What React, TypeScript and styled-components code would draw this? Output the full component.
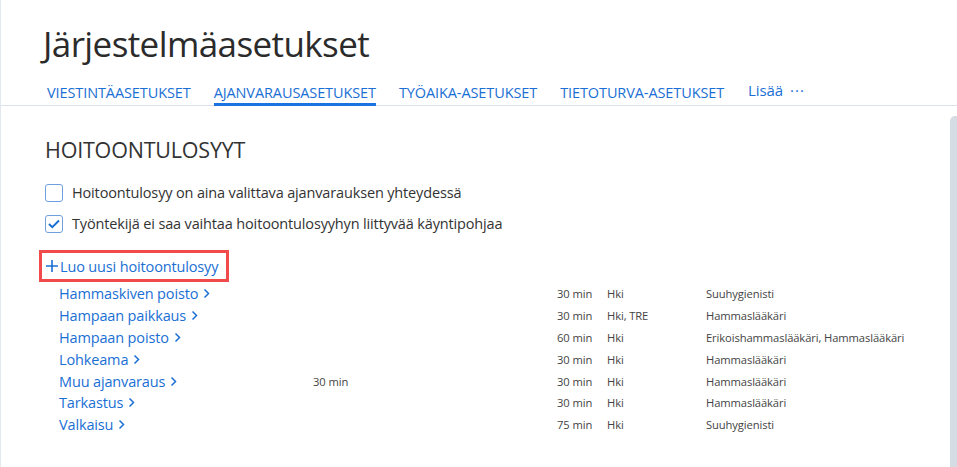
import React from "react";
import styled, { createGlobalStyle } from "styled-components";

const Global = createGlobalStyle`
  html, body { margin: 0; padding: 0; background: #fff; }
  body { font-family: "Open Sans", "Noto Sans", sans-serif; color: #333; }
  * { box-sizing: border-box; }
`;

const Page = styled.div`
  width: 957px;
  height: 467px;
  overflow: hidden;
  border-left: 1px solid #e3e7ef;
  display: flex;
  flex-direction: column;
`;

const Header = styled.header`
  padding: 20px 0 0 42px;
`;

const Title = styled.h1`
  margin: 0;
  font-size: 35px;
  font-weight: 400;
  line-height: 48px;
  color: #2b2b2b;
  letter-spacing: -0.6px;
`;

const TabBar = styled.nav`
  display: flex;
  align-items: flex-end;
  gap: 23px;
  margin-top: 13px;
  border-bottom: 1px solid #dde2ea;
  margin-left: -42px;
  padding-left: 46px;
`;

const Tab = styled.a<{ $active?: boolean }>`
  font-size: 14.5px;
  line-height: 18px;
  color: #1a6fd4;
  text-decoration: none;
  padding-bottom: 1px;
  border-bottom: 3px solid ${(p) => (p.$active ? "#1a73e0" : "transparent")};
  margin-bottom: -1px;
  letter-spacing: -0.1px;
`;

const More = styled(Tab)`
  font-size: 15px;
  padding-bottom: 6px;
  border-bottom: none;
  display: flex;
  gap: 7px;
  align-items: baseline;
  margin-bottom: 0;
  margin-left: 1px;
`;

const Dots = styled.span`
  letter-spacing: 1px;
`;

const Body = styled.div`
  flex: 1;
  display: flex;
  min-height: 0;
`;

const Content = styled.main`
  flex: 1;
  padding: 29px 0 0 44px;
`;

const ScrollTrack = styled.div`
  width: 7px;
  margin-top: 10px;
  background: #d5dce3;
  border-top-left-radius: 5px;
`;

const SectionTitle = styled.h2`
  margin: 0;
  font-size: 21.5px;
  font-weight: 400;
  line-height: 30px;
  color: #333;
  letter-spacing: -0.2px;
`;

const Options = styled.div`
  display: flex;
  flex-direction: column;
  gap: 13px;
  margin-top: 19px;
`;

const Option = styled.label`
  display: flex;
  align-items: center;
  gap: 9px;
  font-size: 14.5px;
  line-height: 18px;
  color: #333;
  letter-spacing: -0.15px;
`;

const Box = styled.span<{ $checked?: boolean }>`
  width: 18px;
  height: 18px;
  border: 1.5px solid #6f9fde;
  border-radius: 3px;
  display: flex;
  align-items: center;
  justify-content: center;
  background: #fff;
`;

const CreateBox = styled.div`
  margin-top: 17px;
  margin-left: -6px;
  width: 190px;
  height: 32px;
  border: 3px solid #f04a4a;
  display: flex;
  align-items: center;
  padding-left: 3px;
`;

const CreateLink = styled.a`
  display: flex;
  align-items: center;
  gap: 1px;
  color: #1a6fd4;
  font-size: 14.5px;
  letter-spacing: -0.15px;
  text-decoration: none;
`;

const Table = styled.div`
  display: grid;
  grid-template-columns: 254px 244px 50px 99px auto;
  grid-auto-rows: 21.8px;
  align-items: center;
  margin-left: 14px;
  margin-top: 1px;
`;

const NameLink = styled.a`
  display: flex;
  align-items: center;
  gap: 5px;
  color: #1a6fd4;
  font-size: 14.5px;
  letter-spacing: -0.15px;
  text-decoration: none;
  white-space: nowrap;
`;

const Cell = styled.span`
  font-size: 11.2px;
  color: #444;
  white-space: nowrap;
  letter-spacing: -0.1px;
`;

const Chevron = () => (
  <svg width="7" height="11" viewBox="0 0 7 11" fill="none">
    <path d="M1.5 1.5 L5.5 5.5 L1.5 9.5" stroke="#1a6fd4" strokeWidth="1.5" />
  </svg>
);

const rows = [
  { name: "Hammaskiven poisto", extra: "", time: "30 min", loc: "Hki", role: "Suuhygienisti" },
  { name: "Hampaan paikkaus", extra: "", time: "30 min", loc: "Hki, TRE", role: "Hammaslääkäri" },
  { name: "Hampaan poisto", extra: "", time: "60 min", loc: "Hki", role: "Erikoishammaslääkäri, Hammaslääkäri" },
  { name: "Lohkeama", extra: "", time: "30 min", loc: "Hki", role: "Hammaslääkäri" },
  { name: "Muu ajanvaraus", extra: "30 min", time: "30 min", loc: "Hki", role: "Hammaslääkäri" },
  { name: "Tarkastus", extra: "", time: "30 min", loc: "Hki", role: "Hammaslääkäri" },
  { name: "Valkaisu", extra: "", time: "75 min", loc: "Hki", role: "Suuhygienisti" },
];

export default function App() {
  return (
    <>
      <Global />
      <Page>
        <Header>
          <Title>Järjestelmäasetukset</Title>
          <TabBar>
            <Tab href="#">VIESTINTÄASETUKSET</Tab>
            <Tab href="#" $active>AJANVARAUSASETUKSET</Tab>
            <Tab href="#">TYÖAIKA-ASETUKSET</Tab>
            <Tab href="#">TIETOTURVA-ASETUKSET</Tab>
            <More href="#">
              Lisää <Dots>···</Dots>
            </More>
          </TabBar>
        </Header>
        <Body>
          <Content>
            <SectionTitle>HOITOONTULOSYYT</SectionTitle>
            <Options>
              <Option>
                <Box />
                Hoitoontulosyy on aina valittava ajanvarauksen yhteydessä
              </Option>
              <Option>
                <Box $checked>
                  <svg width="12" height="10" viewBox="0 0 12 10" fill="none">
                    <path d="M1 5 L4.3 8.2 L11 1.5" stroke="#1a6fd4" strokeWidth="2" />
                  </svg>
                </Box>
                Työntekijä ei saa vaihtaa hoitoontulosyyhyn liittyvää käyntipohjaa
              </Option>
            </Options>
            <CreateBox>
              <CreateLink href="#">
                <svg width="14" height="14" viewBox="0 0 14 14">
                  <path d="M7 1 V13 M1 7 H13" stroke="#1a6fd4" strokeWidth="1.6" />
                </svg>
                Luo uusi hoitoontulosyy
              </CreateLink>
            </CreateBox>
            <Table>
              {rows.map((r) => (
                <React.Fragment key={r.name}>
                  <NameLink href="#">
                    {r.name} <Chevron />
                  </NameLink>
                  <Cell>{r.extra}</Cell>
                  <Cell>{r.time}</Cell>
                  <Cell>{r.loc}</Cell>
                  <Cell>{r.role}</Cell>
                </React.Fragment>
              ))}
            </Table>
          </Content>
          <ScrollTrack />
        </Body>
      </Page>
    </>
  );
}
